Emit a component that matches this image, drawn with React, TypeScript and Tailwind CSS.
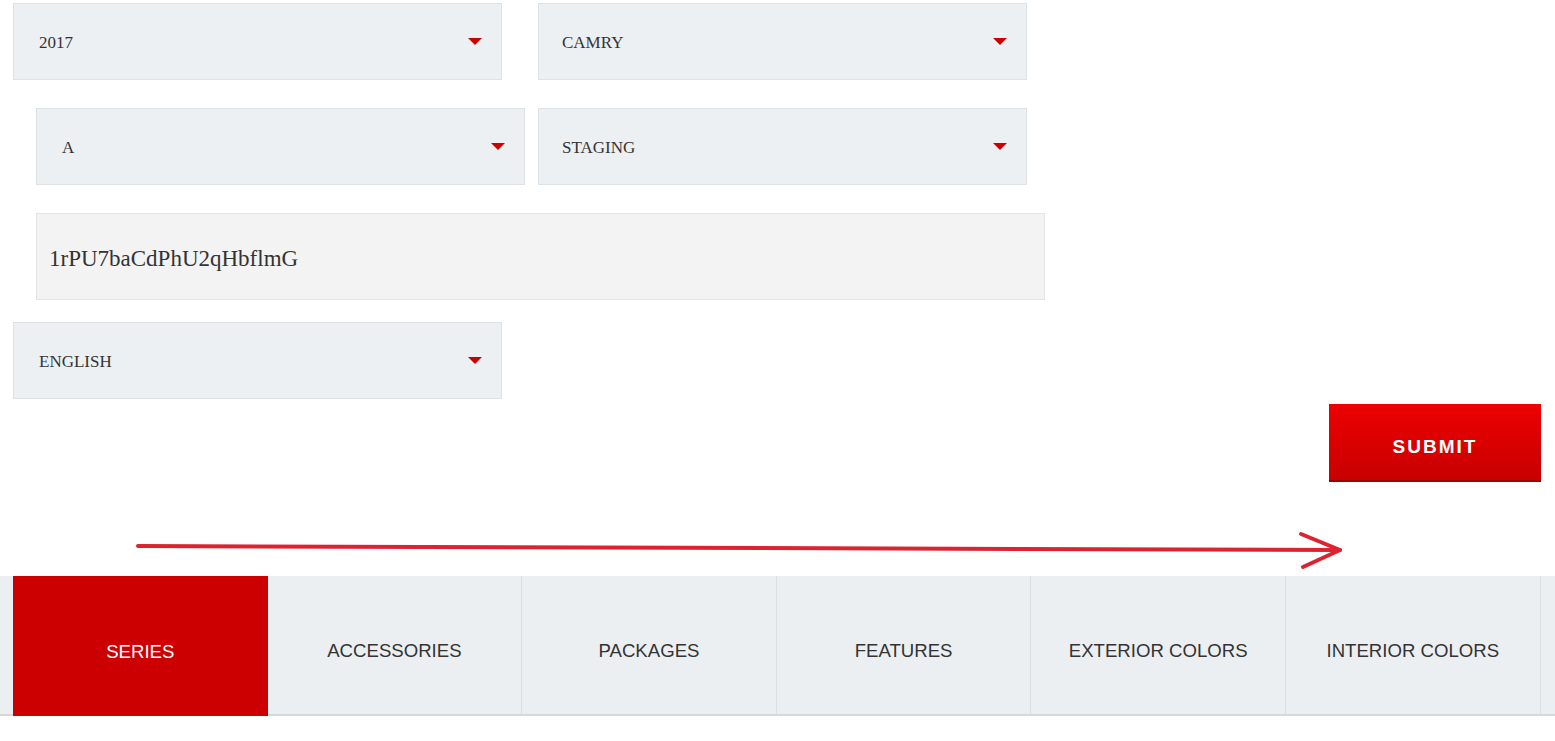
import React from "react";

const tabs = ["SERIES", "ACCESSORIES", "PACKAGES", "FEATURES", "EXTERIOR COLORS", "INTERIOR COLORS", ""];

function Select({ value, className = "", pad = "pl-[25px]" }: { value: string; className?: string; pad?: string }) {
    return (
        <div className={`h-[77px] w-[489px] shrink-0 bg-[#edf0f3] border border-[#dfe2e5] flex items-center justify-between pr-[19px] ${pad} ${className}`}>
            <span className="pt-[2px] text-[17px] text-[#333] font-['Liberation_Serif',serif]">{value}</span>
            <span className="w-0 h-0 border-l-[7px] border-r-[7px] border-t-[7px] border-l-transparent border-r-transparent border-t-[#cc0000]" />
        </div>
    );
}

export default function App() {
    return (
        <div className="w-[1555px] h-[741px] bg-white overflow-hidden font-['Liberation_Sans',Arial,sans-serif]">
            <div className="pt-[3px]">
                {/* Row 1 */}
                <div className="flex pl-[13px] gap-[36px]">
                    <Select value="2017" />
                    <Select value="CAMRY" pad="pl-[23px]" />
                </div>

                {/* Row 2 */}
                <div className="flex pl-[36px] gap-[13px] mt-[28px]">
                    <Select value="A" />
                    <Select value="STAGING" pad="pl-[23px]" />
                </div>

                {/* Key input */}
                <div className="pl-[36px] mt-[28px]">
                    <div className="h-[87px] w-[1009px] bg-[#f3f3f3] border border-[#e4e4e4] flex items-center pl-[12px]">
                        <span className="pt-[6px] text-[23px] text-[#333] font-['Liberation_Serif',serif]">1rPU7baCdPhU2qHbflmG</span>
                    </div>
                </div>

                {/* Language */}
                <div className="pl-[13px] mt-[22px]">
                    <Select value="ENGLISH" />
                </div>

                {/* Submit */}
                <div className="flex justify-end pr-[14px] mt-[5px]">
                    <button className="w-[212px] h-[78px] pt-[10px] bg-gradient-to-b from-[#ee0000] to-[#c80000] border-b-2 border-[#9a0000] text-white font-bold text-[19px] tracking-[2px]">
                        SUBMIT
                    </button>
                </div>
            </div>

            {/* Arrow annotation */}
            <svg width="1555" height="94" viewBox="0 0 1555 94" className="block">
                <path d="M138 64 L1340 68" stroke="#dc2430" strokeWidth="4" strokeLinecap="round" fill="none" />
                <path d="M1301 52 L1340 68 L1303 85" stroke="#dc2430" strokeWidth="4" strokeLinecap="round" strokeLinejoin="round" fill="none" />
            </svg>

            {/* Tabs */}
            <div className="flex pl-[13px] bg-[#eceff2] border-b-2 border-[#d6d9dc] h-[140px]">
                {tabs.map((t, i) => (
                    <div
                        key={i}
                        className={`w-[254.6px] shrink-0 flex items-center justify-center pt-[12px] text-[18.6px] ${i === 0
                            ? "bg-[#cc0000] text-white h-[140px]"
                            : "text-[#333] border-r border-[#dcdfe2]"
                            }`}
                    >
                        {t}
                    </div>
                ))}
            </div>
        </div>
    );
}
